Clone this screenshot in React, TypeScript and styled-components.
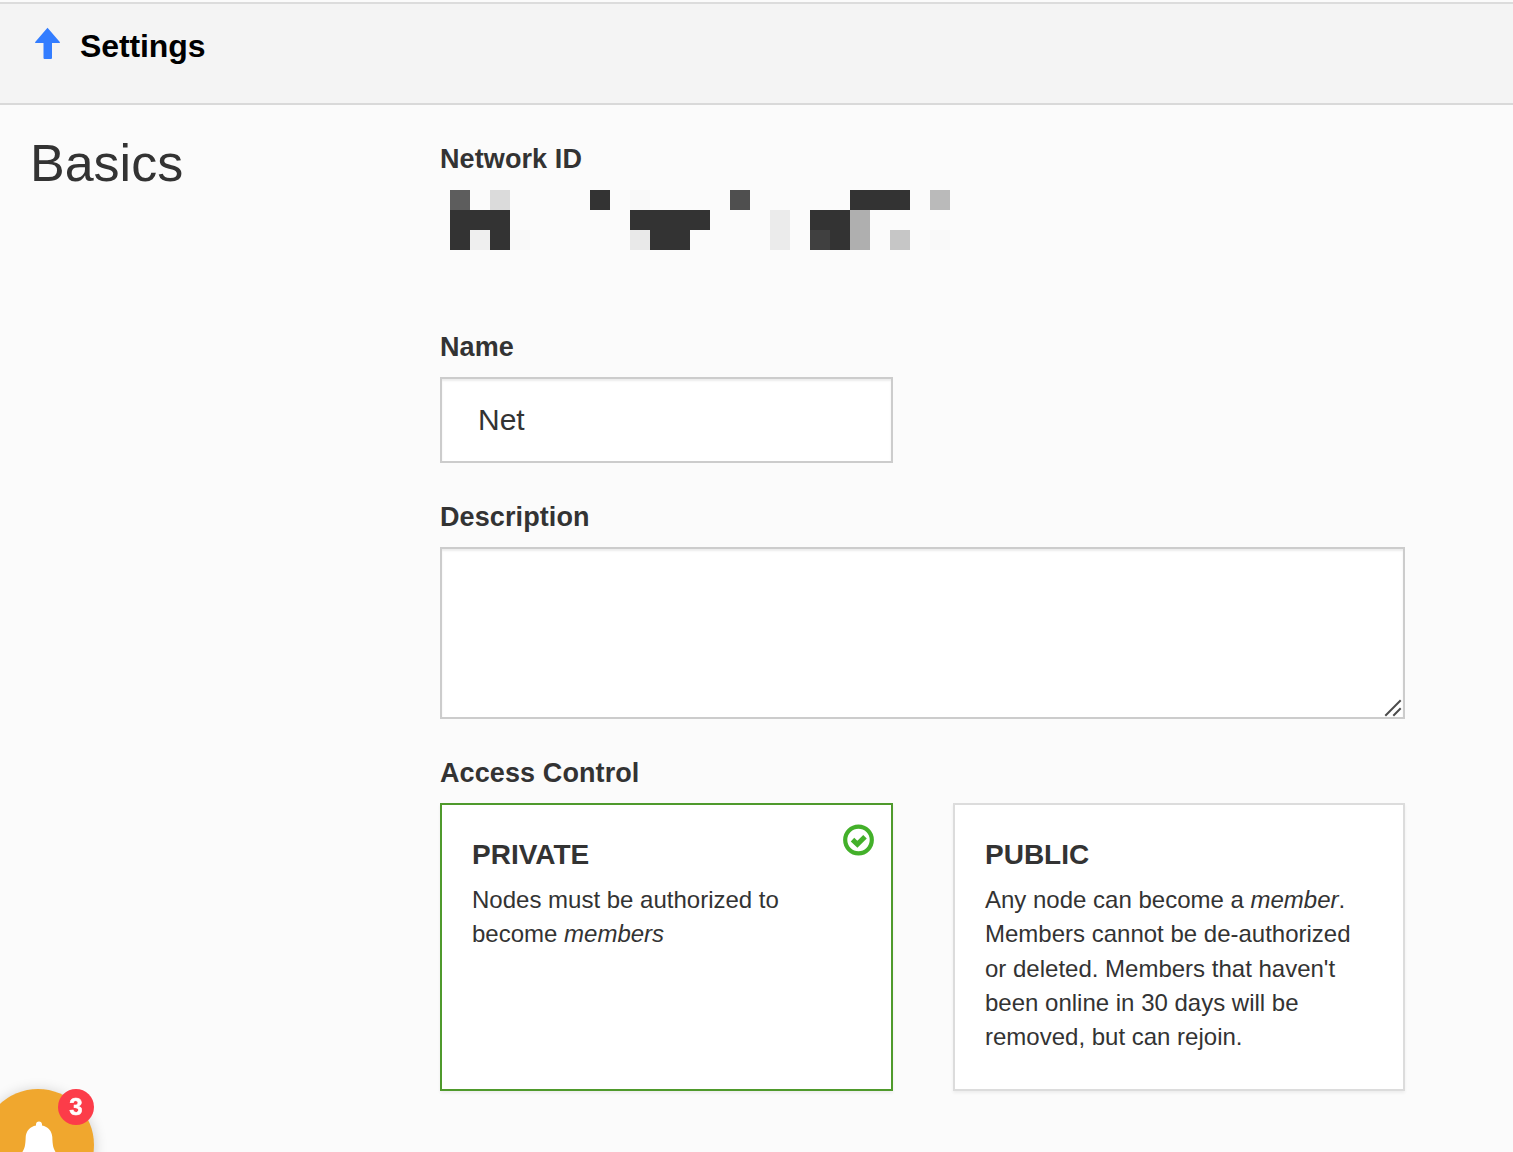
import React from "react";
import styled, { createGlobalStyle } from "styled-components";

const GlobalStyle = createGlobalStyle`
  *, *::before, *::after { box-sizing: border-box; }
  html, body { margin: 0; height: 100%; overflow: hidden; }
  body {
    background: #fbfbfb;
    color: #333;
    font-family: "Liberation Sans", Arial, sans-serif;
    font-size: 24px;
    line-height: 34.28px;
  }
`;

const Page = styled.main`
  height: 1152px;
  padding-top: 2px;
  overflow: hidden;
`;

const Header = styled.header`
  display: flex;
  align-items: flex-start;
  height: 103px;
  padding: 23px 35px 0;
  background: #f4f4f4;
  border-top: 2px solid #dcdcdc;
  border-bottom: 2px solid #d9d9d9;
`;

const ArrowIcon = styled.svg`
  display: block;
  width: 25px;
  height: 33px;
`;

const HeaderTitle = styled.h1`
  margin: 1px 0 0 20px;
  color: #000;
  font-size: 32px;
  line-height: 36px;
  font-weight: 700;
  letter-spacing: -0.1px;
`;

const Section = styled.section`
  display: grid;
  grid-template-columns: 410px 965px;
  padding: 30px 30px 0;
`;

const SectionTitle = styled.h2`
  margin: 0;
  font-size: 52px;
  line-height: 57px;
  font-weight: 400;
`;

const Fields = styled.div`
  display: flex;
  flex-direction: column;
  padding-top: 6px;
`;

const Field = styled.div<{ $gap: number }>`
  display: flex;
  flex-direction: column;
  margin-bottom: ${(p) => p.$gap}px;
`;

const Label = styled.label<{ $space?: number }>`
  margin-bottom: ${(p) => p.$space ?? 12}px;
  font-size: 27px;
  line-height: 36px;
  font-weight: 700;
  letter-spacing: 0.1px;
`;

const Mosaic = styled.div`
  display: grid;
  grid-template-columns: repeat(25, 20px);
  grid-auto-rows: 20px;
  margin-left: 10px;
`;

const Cell = styled.span<{ $color: string }>`
  background: ${(p) => p.$color};
`;

const TextInput = styled.input`
  width: 453px;
  height: 86px;
  padding: 0 36px;
  border: 2px solid #ccc;
  border-radius: 0;
  background: #fff;
  box-shadow: inset 0 2px 2px rgba(0, 0, 0, 0.075);
  color: #333;
  font: 30px "Liberation Sans", Arial, sans-serif;
  outline: none;
`;

const AreaWrap = styled.div`
  position: relative;
  height: 172px;
`;

const TextArea = styled.textarea`
  display: block;
  width: 100%;
  height: 100%;
  padding: 20px 36px;
  border: 2px solid #ccc;
  border-radius: 0;
  background: #fff;
  box-shadow: inset 0 2px 2px rgba(0, 0, 0, 0.075);
  color: #333;
  font: 30px "Liberation Sans", Arial, sans-serif;
  resize: none;
  outline: none;
`;

const Grip = styled.svg`
  position: absolute;
  right: 3px;
  bottom: 2px;
  width: 18px;
  height: 18px;
`;

const Cards = styled.div`
  display: grid;
  grid-template-columns: 453px 452px;
  column-gap: 60px;
`;

const Card = styled.div<{ $selected?: boolean }>`
  position: relative;
  height: 288px;
  padding: 32px 30px 0;
  background: #fff;
  border: 2px solid ${(p) => (p.$selected ? "#4f9a2c" : "#dcdcdc")};
  box-shadow: 0 2px 3px rgba(0, 0, 0, 0.06);
`;

const CardTitle = styled.h3`
  margin: 0 0 10px;
  font-size: 28px;
  line-height: 36px;
  font-weight: 700;
`;

const CardText = styled.p`
  margin: 0;
  white-space: nowrap;
`;

const CheckIcon = styled.svg`
  position: absolute;
  top: 19px;
  right: 17px;
  width: 32px;
  height: 32px;
`;

const BellButton = styled.button`
  position: fixed;
  left: -18px;
  top: 1089px;
  width: 112px;
  height: 112px;
  padding: 0;
  border: 0;
  border-radius: 50%;
  background: #f0a72e;
  box-shadow: 0 2px 14px rgba(0, 0, 0, 0.2);
`;

const BellIcon = styled.svg`
  position: absolute;
  left: 38px;
  top: 32px;
  width: 38px;
  height: 42px;
`;

const Badge = styled.span`
  position: absolute;
  left: 76px;
  top: 0;
  width: 36px;
  height: 36px;
  border-radius: 50%;
  background: #fc3c49;
  color: #fff;
  font: 700 24px/36px "Liberation Sans", Arial, sans-serif;
  -webkit-text-stroke: 0.5px #fff;
  text-align: center;
`;

const D = "#333333";
const mosaicRows: Record<number, string>[] = [
  { 0: "#5d5d5d", 2: "#dbdbdb", 7: D, 9: "#f9f9f9", 14: "#4f4f4f", 20: D, 21: D, 22: D, 24: "#bababa" },
  { 0: D, 1: D, 2: D, 9: D, 10: D, 11: D, 12: D, 16: "#ebebeb", 18: D, 19: D, 20: "#afafaf" },
  { 0: D, 1: "#efefef", 2: D, 3: "#f9f9f9", 9: "#e9e9e9", 10: D, 11: D, 16: "#ebebeb", 18: "#404040", 19: D, 20: "#afafaf", 22: "#c6c6c6", 24: "#f9f9f9" },
];

function NetworkIdMosaic() {
  return (
    <Mosaic>
      {mosaicRows.flatMap((row, y) =>
        Array.from({ length: 25 }, (_, x) => (
          <Cell key={`${y}-${x}`} $color={row[x] ?? "transparent"} />
        ))
      )}
    </Mosaic>
  );
}

export default function App() {
  return (
    <Page>
      <GlobalStyle />
      <Header>
        <ArrowIcon viewBox="0 0 25 33">
          <path
            d="M12.5 .7 25 15.3Q25.1 16 24.4 16H17V31Q17 32 16 32H9.5Q8.5 32 8.5 31V16H.6Q-.1 16 0 15.3Z"
            fill="#337dff"
          />
        </ArrowIcon>
        <HeaderTitle>Settings</HeaderTitle>
      </Header>
      <Section>
        <SectionTitle>Basics</SectionTitle>
        <Fields>
          <Field $gap={79}>
            <Label $space={13}>Network ID</Label>
            <NetworkIdMosaic />
          </Field>
          <Field $gap={36}>
            <Label htmlFor="name">Name</Label>
            <TextInput id="name" defaultValue="Net" />
          </Field>
          <Field $gap={36}>
            <Label htmlFor="description">Description</Label>
            <AreaWrap>
              <TextArea id="description" />
              <Grip viewBox="0 0 18 18">
                <path d="M1.3 16.7 16.7 1.3M9.3 16.7 16.7 9.3" stroke="#4c4c4c" strokeWidth="2" fill="none" />
              </Grip>
            </AreaWrap>
          </Field>
          <Field $gap={0}>
            <Label>Access Control</Label>
            <Cards>
              <Card $selected>
                <CardTitle>PRIVATE</CardTitle>
                <CardText>
                  Nodes must be authorized to
                  <br />
                  become <em>members</em>
                </CardText>
                <CheckIcon viewBox="0 0 32 32">
                  <circle cx="16.5" cy="16" r="13.3" fill="none" stroke="#43b02a" strokeWidth="4.2" />
                  <path d="M10.5 15.6 15.4 20.3 23 12.7" fill="none" stroke="#43b02a" strokeWidth="5" />
                </CheckIcon>
              </Card>
              <Card>
                <CardTitle>PUBLIC</CardTitle>
                <CardText>
                  Any node can become a <em>member</em>.
                  <br />
                  Members cannot be de-authorized
                  <br />
                  or deleted. Members that haven't
                  <br />
                  been online in 30 days will be
                  <br />
                  removed, but can rejoin.
                </CardText>
              </Card>
            </Cards>
          </Field>
        </Fields>
      </Section>
      <BellButton aria-label="Notifications">
        <BellIcon viewBox="0 0 38 42">
          <path
            d="M19 .5C20.8 .5 22 1.8 22 3.5V4.4C28 5.6 32 10 32.3 16C32.6 24 33 28 37 33H1C5 28 5.4 24 5.7 16C6 10 10 5.6 16 4.4V3.5C16 1.8 17.2 .5 19 .5Z"
            fill="#fff"
          />
        </BellIcon>
        <Badge>3</Badge>
      </BellButton>
    </Page>
  );
}
